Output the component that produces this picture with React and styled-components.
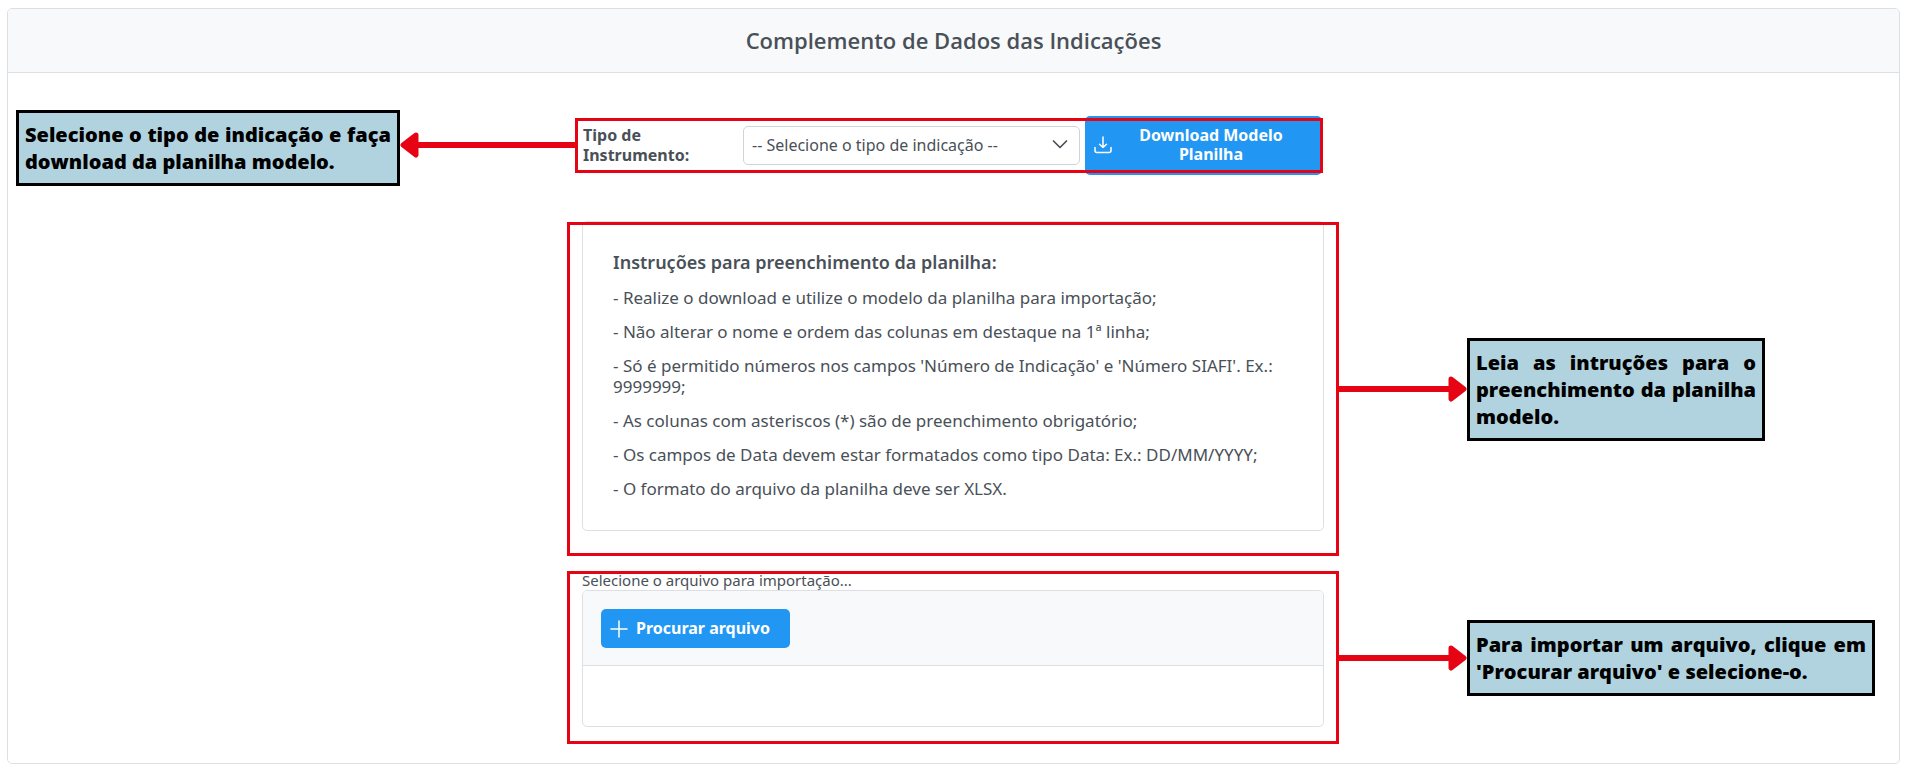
import React from "react";
import styled, { createGlobalStyle } from "styled-components";

const RED = "#e60414";
const BLUE = "#2196f3";
const BORDER = "#dce0e5";
const TEXT = "#495057";
const SUBTLE = "#f8f9fb";

const GlobalStyle = createGlobalStyle`
  *, *::before, *::after { box-sizing: border-box; }
  body {
    margin: 0;
    background: #fff;
    color: ${TEXT};
    font-family: "Noto Sans", "Open Sans", sans-serif;
    font-size: 16px;
  }
`;

const Panel = styled.main`
  margin: 8px 14px 6px 7px;
  border: 1px solid ${BORDER};
  border-radius: 5px;
  overflow: hidden;
`;

const PanelHeader = styled.header`
  padding: 16px;
  background: ${SUBTLE};
  border-bottom: 1px solid ${BORDER};
  text-align: center;
`;

const Title = styled.h1`
  margin: 0;
  font-family: "Open Sans", sans-serif;
  font-size: 22px;
  font-weight: 650;
  line-height: 31px;
`;

const PanelBody = styled.div`
  padding: 31px 1px 19px 0;
`;

const Row = styled.section`
  display: grid;
  grid-template-columns: 1fr minmax(0, ${(p) => p.$center}px) 1fr;
  align-items: center;
  padding: 0 ${(p) => (p.$before ? 16 : 8)}px 0 8px;
  margin-bottom: ${(p) => p.$gap || 0}px;
`;

const Side = styled.div`
  display: flex;
  align-items: center;
`;

const Callout = styled.p`
  flex: 0 0 ${(p) => p.$width}px;
  margin: ${(p) => p.$top || 0}px 0 0;
  padding: 8px 6px;
  border: 3px solid #000;
  background: #b1d3df;
  color: #000;
  font-family: "Open Sans", sans-serif;
  font-size: 20px;
  font-weight: 800;
  line-height: 27px;
  text-align: justify;
`;

const ArrowBox = styled.div`
  display: flex;
  align-items: center;
  flex: ${(p) => (p.$grow ? "1 1 0" : "0 0 128px")};
  flex-direction: ${(p) => (p.$left ? "row-reverse" : "row")};

  svg {
    flex: none;
    margin: ${(p) => (p.$left ? "0 -1px 0 0" : "0 0 0 -1px")};
    transform: ${(p) => (p.$left ? "scaleX(-1)" : "none")};
  }
`;

const ArrowLine = styled.span`
  flex: 1;
  height: 6px;
  background: ${RED};
`;

const Highlight = styled.div`
  position: relative;

  &::after {
    content: "";
    position: absolute;
    inset: 0;
    border: 3px solid ${RED};
    pointer-events: none;
  }
`;

const TypeForm = styled(Highlight)`
  display: flex;
  align-items: center;
  padding: 0 1px 0 8px;
`;

const TypeLabel = styled.label`
  flex: 0 0 160px;
  padding-right: 16px;
  font-weight: 700;
  line-height: 20px;
`;

const SelectWrap = styled.div`
  position: relative;
  flex: 1;
  margin-right: 5px;

  svg {
    position: absolute;
    right: 12px;
    top: 12px;
    pointer-events: none;
  }
`;

const Select = styled.select`
  display: block;
  width: 100%;
  height: 39px;
  padding: 0 40px 0 8px;
  appearance: none;
  border: 1px solid #ced4da;
  border-radius: 5px;
  background: #fff;
  color: ${TEXT};
  font: inherit;
`;

const Button = styled.button`
  display: flex;
  align-items: center;
  gap: 8px;
  border: 0;
  border-radius: 5px;
  background: ${BLUE};
  color: #fff;
  font: inherit;
  font-weight: 700;
  line-height: 19px;
  cursor: pointer;

  svg { flex: none; }
`;

const DownloadButton = styled(Button)`
  flex: 0 0 237px;
  margin: -2px 0;
  padding: 10px 20px 11px 9px;

  span { flex: 1; }
`;

const BrowseButton = styled(Button)`
  padding: 10px 20px 10px 9px;
`;

const InstructionsArea = styled(Highlight)`
  padding: 0 15px 25px;
`;

const Card = styled.div`
  display: flex;
  flex-direction: column;
  gap: 13px;
  margin-top: -1px;
  padding: 28px 30px 31px;
  border: 1px solid ${BORDER};
  border-radius: 5px;
`;

const CardTitle = styled.h2`
  margin: 0;
  font-size: 18px;
  font-weight: 650;
  line-height: 24px;
`;

const Instruction = styled.p`
  margin: 0;
  font-size: 17px;
  line-height: 21px;
`;

const UploadArea = styled(Highlight)`
  padding: 0 15px 17px;
`;

const UploadLabel = styled.div`
  font-size: 15px;
  line-height: 19px;
`;

const Uploader = styled.div`
  border: 1px solid ${BORDER};
  border-radius: 5px;
  overflow: hidden;
`;

const UploadBar = styled.div`
  display: flex;
  padding: 18px 18px 17px;
  background: ${SUBTLE};
  border-bottom: 1px solid ${BORDER};
`;

const UploadContent = styled.div`
  min-height: 60px;
`;

function Arrow({ left, grow }) {
  return (
    <ArrowBox $left={left} $grow={grow} aria-hidden="true">
      <ArrowLine />
      <svg width="19" height="26" viewBox="0 0 19 26">
        <path
          d="M3 3 16 13 3 23Z"
          fill={RED}
          stroke={RED}
          strokeWidth="5"
          strokeLinejoin="round"
        />
      </svg>
    </ArrowBox>
  );
}

const DownloadIcon = () => (
  <svg width="18" height="18" viewBox="0 0 18 18" fill="none" stroke="#fff" strokeWidth="1.5" strokeLinecap="round" strokeLinejoin="round" aria-hidden="true">
    <path d="M9 1v10.500M5.500 8.200 9 11.500l3.500-3.300M1 11.500v3q0 2 2 2h12q2 0 2-2v-3" />
  </svg>
);

const PlusIcon = () => (
  <svg width="18" height="18" viewBox="0 0 18 18" fill="none" stroke="#fff" strokeWidth="1.5" strokeLinecap="round" aria-hidden="true">
    <path d="M9 1v16M1 9h16" />
  </svg>
);

const ChevronIcon = () => (
  <svg width="16" height="16" viewBox="0 0 16 16" fill="none" stroke={TEXT} strokeWidth="1.7" strokeLinecap="round" strokeLinejoin="round" aria-hidden="true">
    <path d="M1.500 3 8 9.500 14.500 3" />
  </svg>
);

const INSTRUCTIONS = [
  "- Realize o download e utilize o modelo da planilha para importação;",
  "- Não alterar o nome e ordem das colunas em destaque na 1ª linha;",
  "- Só é permitido números nos campos 'Número de Indicação' e 'Número SIAFI'. Ex.: 9999999;",
  "- As colunas com asteriscos (*) são de preenchimento obrigatório;",
  "- Os campos de Data devem estar formatados como tipo Data: Ex.: DD/MM/YYYY;",
  "- O formato do arquivo da planilha deve ser XLSX.",
];

export default function App() {
  return (
    <>
      <GlobalStyle />
      <Panel>
        <PanelHeader>
          <Title>Complemento de Dados das Indicações</Title>
        </PanelHeader>
        <PanelBody>
          <Row $center={748} $gap={36} $before>
            <Side>
              <Callout $width={384} $top={6}>
                Selecione o tipo de indicação e faça download da planilha modelo.
              </Callout>
              <Arrow left grow />
            </Side>
            <TypeForm>
              <TypeLabel htmlFor="tipo">Tipo de Instrumento:</TypeLabel>
              <SelectWrap>
                <Select id="tipo">
                  <option>-- Selecione o tipo de indicação --</option>
                </Select>
                <ChevronIcon />
              </SelectWrap>
              <DownloadButton type="button">
                <DownloadIcon />
                <span>Download Modelo Planilha</span>
              </DownloadButton>
            </TypeForm>
          </Row>

          <Row $center={772} $gap={15}>
            <Side />
            <InstructionsArea>
              <Card>
                <CardTitle>Instruções para preenchimento da planilha:</CardTitle>
                {INSTRUCTIONS.map((line) => (
                  <Instruction key={line}>{line}</Instruction>
                ))}
              </Card>
            </InstructionsArea>
            <Side>
              <Arrow />
              <Callout $width={298}>
                Leia as intruções para o preenchimento da planilha modelo.
              </Callout>
            </Side>
          </Row>

          <Row $center={772}>
            <Side />
            <UploadArea>
              <UploadLabel>Selecione o arquivo para importação...</UploadLabel>
              <Uploader>
                <UploadBar>
                  <BrowseButton type="button">
                    <PlusIcon />
                    Procurar arquivo
                  </BrowseButton>
                </UploadBar>
                <UploadContent />
              </Uploader>
            </UploadArea>
            <Side>
              <Arrow />
              <Callout $width={408}>
                Para importar um arquivo, clique em 'Procurar arquivo' e selecione-o.
              </Callout>
            </Side>
          </Row>
        </PanelBody>
      </Panel>
    </>
  );
}
